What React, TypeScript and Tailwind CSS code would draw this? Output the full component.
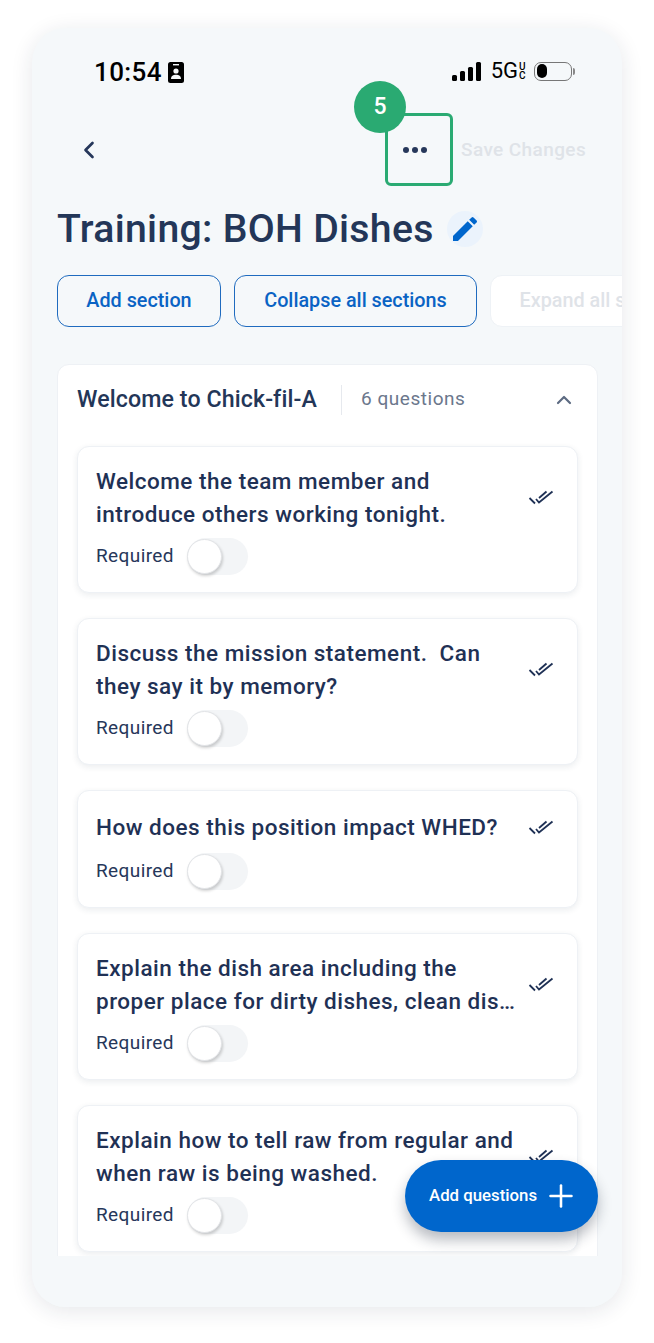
import { ChevronLeft, ChevronUp, Plus } from "lucide-react";

const questions = [
  { text: ["Welcome the team member and", "introduce others working tonight."] },
  { text: ["Discuss the mission statement.\u00a0 Can", "they say it by memory?"] },
  { text: ["How does this position impact WHED?"] },
  { text: ["Explain the dish area including the", "proper place for dirty dishes, clean dis…"] },
  { text: ["Explain how to tell raw from regular and", "when raw is being washed."] },
];

function DoubleCheck() {
  return (
    <svg width="26" height="16" viewBox="0 0 26 16" fill="none" stroke="#1f3155" strokeWidth="1.8" className="shrink-0">
      <path d="M1.5 8 7 13.5" />
      <path d="M8 9 11 12.5 24.5 1.5" />
      <path d="M11 8 18.5 1.5" />
    </svg>
  );
}

function QuestionCard({ text }: { text: string[] }) {
  return (
    <div className="rounded-[12px] border border-[#eef1f5] bg-white pt-[18px] pr-[18px] pb-[17px] pl-[18px] shadow-[0_2px_6px_rgba(30,50,80,0.09)]">
      <div className="flex min-h-[37px] items-center justify-between">
        <div className="text-[22.5px] leading-[33px] font-medium tracking-[0.5px] whitespace-nowrap text-[#1f3155]">
          {text.map((line) => (
            <div key={line}>{line}</div>
          ))}
        </div>
        <div className="mr-[5px]">
          <DoubleCheck />
        </div>
      </div>
      <div className="mt-[7px] flex h-[37px] items-center gap-[13px]">
        <span className="text-[19px] tracking-[0.4px] text-[#26375a]">Required</span>
        <div className="relative h-[37px] w-[61px] rounded-full bg-[#f3f5f7]">
          <div className="absolute top-px left-0 h-[35px] w-[35px] rounded-full border border-[#e2e4e7] bg-white shadow-[1px_2px_3px_rgba(0,0,0,0.18)]" />
        </div>
      </div>
    </div>
  );
}

export default function App() {
  return (
    <div className="h-[1343px] w-[654px] overflow-hidden bg-white px-[32px] pt-[28px] font-['Roboto',sans-serif]">
      <div className="relative h-[1279px] w-[590px] overflow-hidden rounded-[34px] bg-[#f5f8fa] shadow-[0_4px_22px_rgba(30,40,60,0.11)]">
        {/* status bar */}
        <div className="flex h-[85px] items-start justify-between pt-[28px] pr-[50px] pl-[62px]">
          <div className="flex items-center gap-[6px]">
            <span className="text-[26px] leading-[32px] font-medium tracking-[0.4px] text-black">10:54</span>
            <svg width="16" height="21" viewBox="0 0 16 21">
              <rect width="16" height="21" rx="2.5" fill="#000" />
              <rect x="5" y="2" width="6" height="1.4" fill="#f5f8fa" />
              <circle cx="8" cy="9" r="2.6" fill="#f5f8fa" />
              <path d="M3 17c0-3 2.2-4.2 5-4.2S13 14 13 17z" fill="#f5f8fa" />
            </svg>
          </div>
          <div className="flex items-center pt-[3px]">
            <svg width="30" height="19" viewBox="0 0 30 19" fill="#000">
              <rect x="0" y="13" width="5" height="6" rx="1.5" />
              <rect x="8" y="9" width="5" height="10" rx="1.5" />
              <rect x="16" y="5" width="5" height="14" rx="1.5" />
              <rect x="24" y="0" width="5" height="19" rx="1.5" />
            </svg>
            <span className="ml-[9px] text-[22px] leading-[24px] text-black">5G</span>
            <span className="ml-px flex w-[9px] flex-col text-[10px] leading-[9px] font-medium text-black">
              <span>U</span>
              <span>C</span>
            </span>
            <div className="relative ml-[6px] h-[19px] w-[38px] rounded-[7px] border border-[#777] px-[2px] py-[1.5px]">
              <div className="h-full w-[10px] rounded-[5px] bg-black" />
              <div className="absolute top-[5px] -right-[4px] h-[7px] w-[2px] rounded-r-full bg-[#888]" />
            </div>
          </div>
        </div>

        {/* toolbar */}
        <div className="flex h-[73px] items-center">
          <ChevronLeft size={28} strokeWidth={2.3} className="ml-[43px] text-[#26375a]" />
          <div className="relative ml-[282px] flex h-[73px] w-[68px] items-center justify-center rounded-[6px] border-[3px] border-[#2aaa72] pr-[8px]">
            <div className="flex gap-[3px]">
              <span className="h-[6px] w-[6px] rounded-full bg-[#26375a]" />
              <span className="h-[6px] w-[6px] rounded-full bg-[#26375a]" />
              <span className="h-[6px] w-[6px] rounded-full bg-[#26375a]" />
            </div>
            <div className="absolute -top-[35px] -left-[34px] flex h-[52px] w-[52px] items-center justify-center rounded-full bg-[#2aaa72] text-[23px] font-medium text-white">
              5
            </div>
          </div>
          <span className="mt-[2px] ml-[8px] text-[19px] font-medium tracking-[0.4px] whitespace-nowrap text-[#dfe3e8]">Save Changes</span>
        </div>

        {/* title */}
        <div className="mt-[19px] flex h-[48px] items-center pl-[25px]">
          <h1 className="text-[39.2px] leading-[48px] font-medium tracking-[0.3px] whitespace-nowrap text-[#233658]">Training: BOH Dishes</h1>
          <div className="ml-[13px] flex h-[36px] w-[36px] items-center justify-center rounded-full bg-[#ebf3fc]">
            <svg width="32" height="32" viewBox="0 0 24 24" fill="#0066cc">
              <path d="M3 17.25V21h3.75L17.81 9.94l-3.75-3.75zM20.71 7.04a1 1 0 0 0 0-1.41l-2.34-2.34a1 1 0 0 0-1.41 0l-1.83 1.83 3.75 3.75z" />
            </svg>
          </div>
        </div>

        {/* section actions */}
        <div className="mt-[22px] flex gap-[13px] pl-[25px] whitespace-nowrap">
          <button className="h-[52px] w-[164px] shrink-0 rounded-[12px] border-[1.5px] border-[#1f6bbf] text-[19.8px] font-medium text-[#0a63c4]">Add section</button>
          <button className="h-[52px] w-[243px] shrink-0 rounded-[12px] border-[1.5px] border-[#1f6bbf] text-[19.8px] font-medium text-[#0a63c4]">Collapse all sections</button>
          <button className="h-[52px] w-[230px] shrink-0 rounded-[12px] border border-[#eef2f6] bg-white text-[19.8px] font-medium text-[#dfe3e8]">Expand all sections</button>
        </div>

        {/* section */}
        <div className="mt-[37px] ml-[25px] h-[900px] w-[541px] rounded-t-[12px] border border-[#eef1f5] bg-white px-[19px]">
          <div className="flex h-[69px] items-center">
            <span className="text-[23.2px] font-medium tracking-[0.1px] whitespace-nowrap text-[#233658]">Welcome to Chick-fil-A</span>
            <span className="ml-[24px] h-[30px] w-px bg-[#e6e9ee]" />
            <span className="ml-[19px] text-[19px] tracking-[0.55px] whitespace-nowrap text-[#6b778c]">6 questions</span>
            <ChevronUp size={24} strokeWidth={2.2} className="mr-[2px] ml-auto text-[#5d6b82]" />
          </div>
          <div className="mt-[12px] flex flex-col gap-[25px]">
            {questions.map((q) => (
              <QuestionCard key={q.text[0]} text={q.text} />
            ))}
          </div>
        </div>

        {/* page background below the scroll area */}
        <div className="absolute right-0 bottom-0 left-0 h-[51px] bg-[#f5f8fa]" />

        <button className="absolute top-[1132px] left-[373px] flex h-[72px] w-[193px] items-center rounded-full bg-[#0066cc] pl-[24px] text-[16.8px] font-medium whitespace-nowrap text-white shadow-[0_8px_14px_rgba(20,30,50,0.3)]">
          Add questions
          <Plus size={36} strokeWidth={1.7} className="ml-[6px]" />
        </button>
      </div>
    </div>
  );
}
